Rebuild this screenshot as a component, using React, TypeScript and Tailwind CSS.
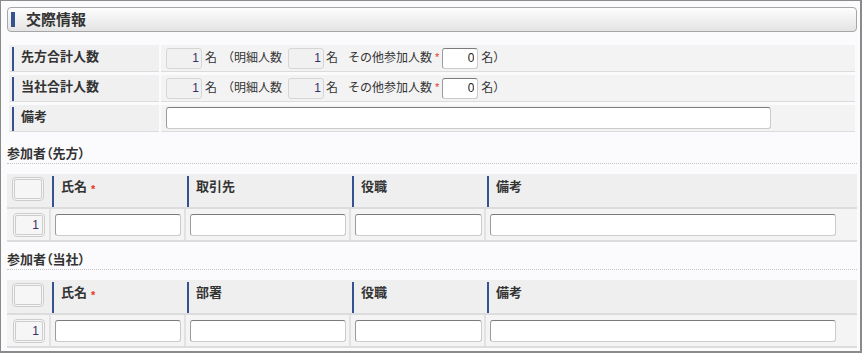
const inset =
  'rounded-[3px] border border-t-[#7b7b7b] border-l-[#9c9c9c] border-r-[#cbcbcb] border-b-[#cbcbcb] bg-white outline-none'

function ReadOnlyNum({ v }: { v: string }) {
  return (
    <input
      readOnly
      defaultValue={v}
      className="w-[36px] h-[21px] rounded-[3px] border border-[#d6d6d6] bg-[#f1f1f1] pr-[2px] text-right text-[12px] text-[#36306a] outline-none"
    />
  )
}

function Star() {
  return <span className="self-start text-[11px] leading-none text-[#e8361c]">*</span>
}

function FormRow({ label, children }: { label: string; children: React.ReactNode }) {
  return (
    <div className="flex h-[27px] gap-[2px]">
      <div className="flex w-[150px] border-b border-[#dcdcdc] bg-[#f0f0f0] pl-[3px] pt-[2px]">
        <div className="w-[2px] bg-[#34528f]" />
        <div className="pl-[7px] text-[13px] font-bold leading-[20px] text-[#333]">{label}</div>
      </div>
      <div className="flex flex-1 items-center border-b border-[#dcdcdc] bg-[#f3f3f3] pl-[5px] text-[12px] text-[#333]">
        {children}
      </div>
    </div>
  )
}

function Counts() {
  return (
    <>
      <ReadOnlyNum v="1" />
      <span className="ml-[3px]">名</span>
      <span className="ml-[5px]">（明細人数</span>
      <span className="ml-[6px] flex">
        <ReadOnlyNum v="1" />
      </span>
      <span className="ml-[2px]">名</span>
      <span className="ml-[10px]">その他参加人数</span>
      <span className="ml-[3px] flex h-[21px] items-start pt-[4px]">
        <Star />
      </span>
      <input
        defaultValue="0"
        className={`${inset} ml-[3px] h-[21px] w-[36px] pr-[3px] text-right text-[12px] text-[#222]`}
      />
      <span className="ml-[3px]">名）</span>
    </>
  )
}

function SectionTitle({ text, className }: { text: string; className: string }) {
  return (
    <div
      className={`${className} h-[19px] border-b border-dotted border-[#c4c4c4] text-[13px] font-bold leading-[18px] text-[#333] [font-feature-settings:'palt']`}
    >
      {text}
    </div>
  )
}

function DoubleBox({ v }: { v?: string }) {
  return (
    <div className="flex h-[24px] w-[32px] items-center justify-end rounded-[4px] border-[3px] border-double border-[#cdcdcd] bg-[#f6f6f6] pr-[3px] text-[12px] text-[#36306a]">
      {v}
    </div>
  )
}

function Participants({ cols }: { cols: { name: string; star?: boolean }[] }) {
  const widths = ['w-[126px]', 'w-[156px]', 'w-[127px]', 'w-[346px]']
  return (
    <div className="mt-[10px] w-[850px]">
      <div className="grid h-[35px] grid-cols-[42px_135px_165px_135px_373px] border-b-2 border-[#dcdcdc] bg-[#efefef]">
        <div className="flex pl-[5px] pt-[3px]">
          <DoubleBox />
        </div>
        {cols.map((c) => (
          <div key={c.name} className="flex pl-[3px] pt-[2px]">
            <div className="flex h-full gap-[4px] border-l-2 border-[#34528f] pl-[7px] pt-[2px] text-[13px] font-bold leading-[18px] text-[#333]">
              <span>{c.name}</span>
              {c.star && (
                <span className="pt-[2px]">
                  <Star />
                </span>
              )}
            </div>
          </div>
        ))}
      </div>
      <div className="grid h-[33px] grid-cols-[42px_135px_165px_135px_373px] border-b-2 border-[#dcdcdc] bg-[#f4f4f4]">
        <div className="flex items-center pl-[6px]">
          <DoubleBox v="1" />
        </div>
        {widths.map((w, i) => (
          <div key={i} className="flex items-center border-l-2 border-[#e2e2e2] pl-[4px]">
            <input className={`${inset} ${w} h-[22px] px-[3px] text-[12px]`} />
          </div>
        ))}
      </div>
    </div>
  )
}

export default function App() {
  return (
    <div className="h-[353px] w-[862px] overflow-hidden border-t border-l border-r-2 border-b-2 border-[#8a8a8a] bg-[#fbfbfd] pl-[6px] pt-[6px] font-['Liberation_Sans','Noto_Sans_CJK_JP',sans-serif] text-[#333]">
      <div className="w-[850px]">
        <div className="flex h-[25px] items-center rounded-[4px] border border-[#a6a6a6] bg-gradient-to-b from-[#fdfdfd] to-[#e4e4e4] pl-[3px]">
          <div className="h-[15px] w-[4px] bg-[#34528f]" />
          <div className="pl-[11px] text-[15px] font-bold leading-none text-[#333]">交際情報</div>
        </div>

        <div className="mt-[13px] flex flex-col gap-[3px] px-[2px]">
          <FormRow label="先方合計人数">
            <Counts />
          </FormRow>
          <FormRow label="当社合計人数">
            <Counts />
          </FormRow>
          <FormRow label="備考">
            <input className={`${inset} h-[22px] w-[605px] px-[3px] text-[12px]`} />
          </FormRow>
        </div>

        <SectionTitle text="参加者（先方）" className="mt-[13px]" />
        <Participants
          cols={[{ name: '氏名', star: true }, { name: '取引先' }, { name: '役職' }, { name: '備考' }]}
        />

        <SectionTitle text="参加者（当社）" className="mt-[9px]" />
        <Participants
          cols={[{ name: '氏名', star: true }, { name: '部署' }, { name: '役職' }, { name: '備考' }]}
        />
      </div>
    </div>
  )
}
